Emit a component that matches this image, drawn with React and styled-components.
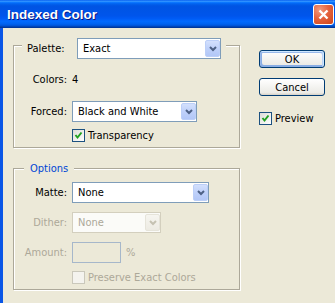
import React from 'react';
import styled, { createGlobalStyle } from 'styled-components';

const GlobalStyle = createGlobalStyle`
  html, body {
    margin: 0;
    padding: 0;
    background: #ece9d8;
  }
  body {
    font-family: "DejaVu Sans Condensed", "Liberation Sans", sans-serif;
    font-size: 11px;
    line-height: 13px;
    color: #000;
  }
`;

const Chevron = ({ color }) => (
  <svg width="8" height="6" viewBox="0 0 8 6">
    <polyline points="1,1 4,4 7,1" fill="none" stroke={color} strokeWidth="2" />
  </svg>
);

const Check = () => (
  <svg width="9" height="9" viewBox="0 0 9 9">
    <polyline points="1.5,4 3.5,6.5 7.5,1.5" fill="none" stroke="#21a121" strokeWidth="2" />
  </svg>
);

const ComboBox = ({ value, width, disabled }) => (
  <Select $w={width} $disabled={disabled}>
    <SelectText>{value}</SelectText>
    <DropButton $disabled={disabled}>
      <Chevron color={disabled ? '#c5c2b2' : '#4d6185'} />
    </DropButton>
  </Select>
);

const CheckBox = ({ checked, disabled, children }) => (
  <CheckRow $disabled={disabled}>
    <Box $disabled={disabled}>{checked && <Check />}</Box>
    <span>{children}</span>
  </CheckRow>
);

export default function App() {
  return (
    <>
      <GlobalStyle />
      <Window>
        <TitleBar>
          <Title>Indexed Color</Title>
          <CloseButton aria-label="Close">
            <svg width="11" height="11" viewBox="0 0 11 11">
              <path d="M1.5 1.5 L9.5 9.5 M9.5 1.5 L1.5 9.5" stroke="#fff" strokeWidth="2.4" />
            </svg>
          </CloseButton>
        </TitleBar>

        <Body>
          <LeftColumn>
            <Group $pb={5}>
              <Legend $mt={-8} $ml={8} $px={5}>
                <LegendLabel>Palette:</LegendLabel>
                <ComboBox value="Exact" width={144} />
              </Legend>
              <Row $mt={10}>
                <Label>Colors:</Label>
                <span>4</span>
              </Row>
              <Row $mt={11}>
                <Label>Forced:</Label>
                <ComboBox value="Black and White" width={125} />
              </Row>
              <Indent $mt={7}>
                <CheckBox checked>Transparency</CheckBox>
              </Indent>
            </Group>

            <Group $mt={20} $pb={5}>
              <Legend $mt={-7} $ml={10} $px={6} $blue>
                Options
              </Legend>
              <Row $mt={7}>
                <Label>Matte:</Label>
                <ComboBox value="None" width={137} />
              </Row>
              <Row $mt={9} $disabled>
                <Label>Dither:</Label>
                <ComboBox value="None" width={89} disabled />
              </Row>
              <Row $mt={9} $disabled>
                <Label>Amount:</Label>
                <TextInput />
                <Percent>%</Percent>
              </Row>
              <Indent $mt={8}>
                <CheckBox disabled>Preserve Exact Colors</CheckBox>
              </Indent>
            </Group>
          </LeftColumn>

          <RightColumn>
            <Button $default>OK</Button>
            <Button>Cancel</Button>
            <PreviewWrap>
              <CheckBox checked>Preview</CheckBox>
            </PreviewWrap>
          </RightColumn>
        </Body>
      </Window>
    </>
  );
}

// Styled Components

const Window = styled.div`
  width: 335px;
  height: 303px;
  display: flex;
  flex-direction: column;
  overflow: hidden;
  background: #ece9d8;
`;

const TitleBar = styled.div`
  flex: none;
  height: 28px;
  box-sizing: border-box;
  display: flex;
  align-items: center;
  justify-content: space-between;
  padding: 1px 1px 0 7px;
  background: linear-gradient(
    180deg,
    #0058ee 0%,
    #3593ff 4%,
    #288eff 6%,
    #127dff 8%,
    #036ffc 10%,
    #0262ee 14%,
    #0057e5 20%,
    #0054e3 24%,
    #0055eb 56%,
    #005bf5 66%,
    #026afe 76%,
    #0062ef 86%,
    #0052d6 92%,
    #0040ab 96%,
    #003092 100%
  );
`;

const Title = styled.span`
  font-family: "Liberation Sans", Arial, sans-serif;
  font-weight: bold;
  font-size: 13.5px;
  color: #fff;
  text-shadow: 1px 1px #0a1883;
`;

const CloseButton = styled.button`
  width: 21px;
  height: 21px;
  padding: 0;
  box-sizing: border-box;
  border: 1px solid #fff;
  border-radius: 3px;
  display: flex;
  align-items: center;
  justify-content: center;
  background: radial-gradient(circle at 30% 25%, #f29a7e 0%, #e5633f 45%, #cc4419 100%);
`;

const Body = styled.div`
  flex: 1;
  display: flex;
  align-items: flex-start;
  border-left: 3px solid #0a56e6;
  padding: 17px 0 0 10px;
`;

const LeftColumn = styled.div`
  width: 227px;
  display: flex;
  flex-direction: column;
`;

const Group = styled.div`
  display: flex;
  flex-direction: column;
  border: 1px solid #aca899;
  box-shadow: inset 1px 1px #fff, 1px 1px #fff;
  margin-top: ${(p) => p.$mt || 0}px;
  padding-bottom: ${(p) => p.$pb}px;
`;

const Legend = styled.div`
  align-self: flex-start;
  display: flex;
  align-items: center;
  margin: ${(p) => p.$mt}px 0 0 ${(p) => p.$ml}px;
  padding: 0 ${(p) => p.$px}px;
  background: #ece9d8;
  color: ${(p) => (p.$blue ? '#0046d5' : '#000')};
`;

const LegendLabel = styled.span`
  width: 40px;
  margin-right: 10px;
`;

const Row = styled.div`
  display: flex;
  align-items: center;
  height: 21px;
  margin-top: ${(p) => p.$mt}px;
  color: ${(p) => (p.$disabled ? '#aca899' : '#000')};
`;

const Label = styled.span`
  flex: none;
  width: 53px;
  margin-right: 5px;
  text-align: right;
`;

const Indent = styled.div`
  margin: ${(p) => p.$mt}px 0 0 58px;
`;

const Select = styled.div`
  flex: none;
  width: ${(p) => p.$w}px;
  height: 21px;
  box-sizing: border-box;
  display: flex;
  align-items: center;
  padding: 1px 0 1px 0;
  border: 1px solid ${(p) => (p.$disabled ? '#d3cfbe' : '#7f9db9')};
  background: ${(p) => (p.$disabled ? '#fbfbf8' : '#fff')};
  color: ${(p) => (p.$disabled ? '#aca899' : '#000')};
`;

const SelectText = styled.span`
  flex: 1;
  padding-left: 5px;
  white-space: nowrap;
`;

const DropButton = styled.span`
  flex: none;
  width: 15px;
  height: 17px;
  box-sizing: border-box;
  display: flex;
  align-items: center;
  justify-content: center;
  border-radius: 2px;
  border: 1px solid ${(p) => (p.$disabled ? '#e6e4da' : '#bccff8')};
  background: ${(p) =>
    p.$disabled
      ? 'linear-gradient(180deg, #f6f5f0 0%, #edebe3 100%)'
      : 'linear-gradient(180deg, #d3e0fd 0%, #bfd1fa 50%, #b2c7f7 100%)'};
`;

const TextInput = styled.span`
  flex: none;
  width: 49px;
  height: 21px;
  box-sizing: border-box;
  border: 1px solid #a6b7ca;
  background: #ece9d8;
`;

const Percent = styled.span`
  margin-left: 5px;
`;

const CheckRow = styled.label`
  display: flex;
  align-items: center;
  gap: 3px;
  height: 13px;
  color: ${(p) => (p.$disabled ? '#aca899' : '#000')};
`;

const Box = styled.span`
  flex: none;
  width: 13px;
  height: 13px;
  box-sizing: border-box;
  display: flex;
  align-items: center;
  justify-content: center;
  border: 1px solid ${(p) => (p.$disabled ? '#cac8bb' : '#1c5180')};
  background: ${(p) =>
    p.$disabled ? '#f4f3ee' : 'linear-gradient(135deg, #dcdcd7 0%, #fff 100%)'};
`;

const RightColumn = styled.div`
  display: flex;
  flex-direction: column;
  gap: 10px;
  margin: 5px 0 0 19px;
`;

const Button = styled.button`
  width: 66px;
  height: 18px;
  padding: 0;
  box-sizing: border-box;
  font: inherit;
  color: #000;
  border: 1px solid #003c74;
  border-radius: 3px;
  background: linear-gradient(180deg, #fff 0%, #ecebe6 86%, #d6d0c5 100%);
  box-shadow: ${(p) =>
    p.$default
      ? 'inset -1px 1px #cee7ff, inset 1px 2px #98b8ea, inset -2px 2px #bcd4f6, inset 1px -1px #89ade4, inset 2px -2px #89ade4'
      : 'none'};
`;

const PreviewWrap = styled.div`
  margin-top: 6px;
`;
